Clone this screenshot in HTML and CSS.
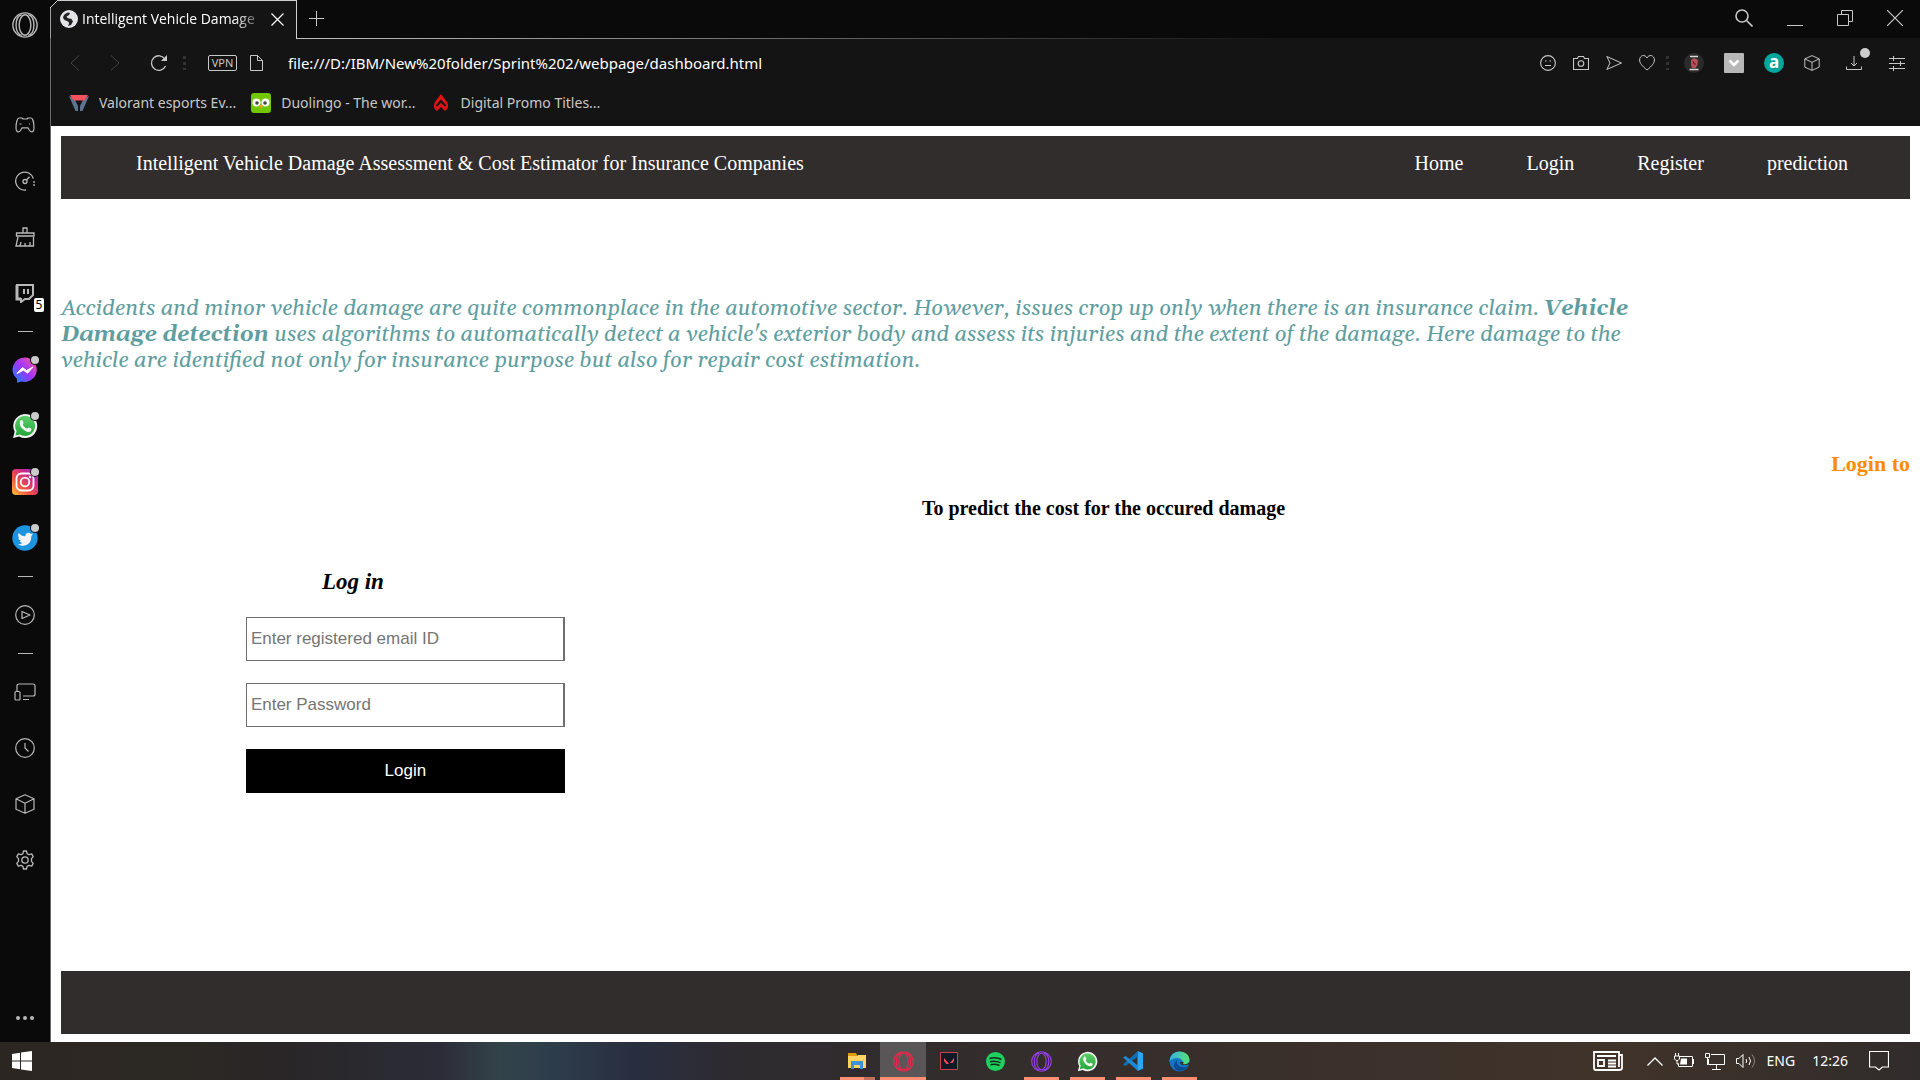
FILE: index.html
```html
<!DOCTYPE html>
<html lang="en">
<head>
<meta charset="utf-8">
<title>Intelligent Vehicle Damage Assessment</title>
<link rel="stylesheet" href="styles.css">
</head>
<body>
<svg class="defs" aria-hidden="true">
  <defs>
    <linearGradient id="g-messenger" x1="0" y1="1" x2="1" y2="0"><stop offset="0" stop-color="#0a8bff"/><stop offset=".5" stop-color="#a033ff"/><stop offset="1" stop-color="#ff5c87"/></linearGradient>
    <linearGradient id="g-insta" x1="0" y1="1" x2="1" y2="0"><stop offset="0" stop-color="#ffc53d"/><stop offset=".35" stop-color="#f2543d"/><stop offset=".65" stop-color="#cf2c86"/><stop offset="1" stop-color="#8a2bd0"/></linearGradient>
    <linearGradient id="g-wa" x1="0" y1="0" x2="0" y2="1"><stop offset="0" stop-color="#5fd06b"/><stop offset="1" stop-color="#22a53a"/></linearGradient>
    <linearGradient id="g-edge" x1="0" y1="0" x2="1" y2="0"><stop offset="0" stop-color="#2fb4ee"/><stop offset="1" stop-color="#5fe06a"/></linearGradient>
    <symbol id="i-opera" viewBox="0 0 24 24"><g fill="none" stroke="currentColor" stroke-width="1.300"><circle cx="12" cy="12" r="11.200"/><ellipse cx="12" cy="12" rx="5.400" ry="9.400"/><path d="M9 2.400c-7 2-7 17.200 0 19.200M15 2.400c7 2 7 17.200 0 19.200"/></g></symbol>
    <symbol id="i-cube" viewBox="0 0 20 20"><g fill="none" stroke="currentColor" stroke-linejoin="round" stroke-width="1.200"><path d="M10 .8l9 4v10.400l-9 4-9-4V4.800zM1 4.800l9 4.400 9-4.400M10 9.200v10"/></g></symbol>
    <symbol id="i-whatsapp" viewBox="0 0 26 26"><path d="M1 25l1.700-6.200A12 12 0 1 1 7.200 23.400z" fill="#f2f2f2"/><path d="M3.400 22.600l1.200-4.400A10 10 0 1 1 8 21.500z" fill="url(#g-wa)"/><path d="M8.500 7.500c.8-.9 1.800-.7 2.200.2l.8 2c.3.700-.9 1.500-.7 2 1 1.900 2.200 3 4.200 3.900.6.200 1.200-1.400 1.900-1.100l2.200 1.100c.7.400.3 2-.4 2.600-2 1.600-5 .3-7.300-1.600-2-1.700-5.100-5.600-2.900-9.100z" fill="#f7f7f7"/></symbol>
  </defs>
</svg>
<div class="screen">
  <div class="browser">
    <aside class="sidebar" aria-label="Browser sidebar">
      <div class="side-logo"><svg width="26" height="26"><use href="#i-opera"/></svg></div>
      <div class="side-item"><svg width="20" height="16" viewBox="0 0 20 16"><g fill="none" stroke="currentColor" stroke-width="1.200" stroke-linejoin="round"><path d="M4 1h3l1 1h4l1-1h3c1.500 0 3 4 3 10 0 4-2.500 5-4.500 2.500L13 10.800H7l-1.500 2.700C3.500 16 1 15 1 11 1 5 2.500 1 4 1z"/><path d="M4.500 7h2M14 7h1"/></g></svg></div>
      <div class="side-item"><svg width="20" height="20" viewBox="0 0 20 20"><g fill="none" stroke="currentColor" stroke-width="1.300"><path d="M11 19A9 9 0 1 1 18.300 7.500"/><path d="M19 10v5" stroke-dasharray="2 1"/><circle cx="10" cy="10.500" r="2"/><path d="M11.500 9L14.500 5.800"/></g></svg></div>
      <div class="side-item"><svg width="20" height="20" viewBox="0 0 20 20"><g fill="none" stroke="currentColor" stroke-width="1.300"><path d="M8 6V1h4v5M3 6h14l2 0v3H1.500V6zM3 10L1 19h17.500V10M5 19l1-4M10 19v-3M15 19v-4"/></g></svg></div>
      <div class="side-item"><svg width="20" height="20" viewBox="0 0 20 20"><path d="M2 2h16v10l-4 4h-4l-4 3v-3H2z" fill="none" stroke="currentColor" stroke-width="2"/><path d="M2 2v14h4" fill="none" stroke="currentColor" stroke-width="3"/><path d="M9 6v5M13 6v5" stroke="currentColor" stroke-width="2"/></svg><span class="count">5</span></div>
      <hr class="side-rule">
      <div class="side-item"><svg width="26" height="26" viewBox="0 0 26 26"><path d="M13 .5a12.200 12.200 0 1 1-3.500 24L5 25.800v-3.700A12.200 12.200 0 0 1 13 .5z" fill="url(#g-messenger)"/><path d="M5 16.500l5.500-6 4 3 6.500-3.500-5.500 6.200-4-3z" fill="#fff" stroke="#fff"/></svg><i class="dot"></i></div>
      <div class="side-item"><svg width="26" height="26"><use href="#i-whatsapp"/></svg><i class="dot"></i></div>
      <div class="side-item"><svg width="26" height="26" viewBox="0 0 26 26"><rect width="26" height="26" rx="4" fill="url(#g-insta)"/><g fill="none" stroke="#fff" stroke-width="1.800"><rect x="4.500" y="4.500" width="17" height="17" rx="5"/><circle cx="13" cy="13" r="4.300"/></g><circle cx="18" cy="8" r="1.200" fill="#fff"/></svg><i class="dot"></i></div>
      <div class="side-item"><svg width="26" height="26" viewBox="0 0 26 26"><circle cx="13" cy="13" r="12.700" fill="#1c94e0"/><path d="M21 8.500l-2 .6c-2-2.600-6-1-5.600 2.200-2.900 0-5-1.300-6.700-3.300-1.200 2-.3 4 .9 5l-1.300-.4c.1 1.800 1.300 2.800 2.700 3.300H7.700c.4 1.200 1.500 1.900 2.800 2-1.500 1.100-3 1.400-4.700 1.300 6.500 3.700 13.700.3 13.500-8z" fill="#f4f4f4"/></svg><i class="dot"></i></div>
      <hr class="side-rule">
      <div class="side-item"><svg width="20" height="20" viewBox="0 0 20 20"><g fill="none" stroke="currentColor" stroke-width="1.200" stroke-linejoin="round"><circle cx="10" cy="10" r="9.300"/><path d="M7 6.500v7l8-3.500z"/></g></svg></div>
      <hr class="side-rule">
      <div class="side-item"><svg width="22" height="18" viewBox="0 0 22 18"><g fill="none" stroke="currentColor" stroke-width="1.200"><path d="M3 8V3q0-2 2-2h14q2 0 2 2v8q0 2-2 2H9M9 16.500h6"/><rect x="1" y="8.500" width="5" height="8.500" rx="1"/></g></svg></div>
      <div class="side-item"><svg width="20" height="20" viewBox="0 0 20 20"><g fill="none" stroke="currentColor" stroke-width="1.200"><circle cx="10" cy="10" r="9.300"/><path d="M10 5v5l3.500 3.500"/></g></svg></div>
      <div class="side-item"><svg width="20" height="20"><use href="#i-cube"/></svg></div>
      <div class="side-item"><svg width="20" height="20" viewBox="0 0 20 20"><g fill="none" stroke="currentColor" stroke-width="1.300" stroke-linejoin="round"><path d="M8.500 1h3l.6 2.600 1.900 1.100 2.700-.8 1.500 2.700L16.500 8.600v2.800l1.700 2-1.500 2.700-2.700-.8-1.900 1.100-.6 2.600h-3l-.6-2.600L6 15.300l-2.700.8-1.500-2.700 1.700-2V8.600l-1.700-2 1.500-2.700 2.700.8 1.900-1.100z"/><circle cx="10" cy="10" r="3.200"/></g></svg></div>
      <div class="side-more"><svg width="18" height="4" viewBox="0 0 18 4"><g fill="currentColor"><circle cx="2" cy="2" r="2"/><circle cx="9" cy="2" r="2"/><circle cx="16" cy="2" r="2"/></g></svg></div>
    </aside>
    <div class="window">
      <div class="tabs">
        <div class="tab">
          <svg class="tab-edge" width="20" height="38" viewBox="0 0 20 38"><path d="M0 0h8L0 8z" fill="#0a0a0a"/><path d="M0 38V8L7.500.5H20" fill="none" stroke="#d0d0d0"/></svg>
          <svg width="18" height="18" viewBox="0 0 18 18"><circle cx="9" cy="9" r="9" fill="#e4e4e8"/><path d="M3 8q0-4 5-5.500l2 .5-1 2-2.500 1.500 1 1.500 4 1 1.500 2.500-2 3.500-3 1q2-3 0-4.500L4.500 10z" fill="#222"/></svg>
          <span class="tab-title">Intelligent Vehicle Damage</span>
          <button class="icon" aria-label="Close tab"><svg width="13" height="13" viewBox="0 0 13 13"><path d="M.5.500l12 12M12.500.500l-12 12" stroke="currentColor" stroke-width="1.200"/></svg></button>
        </div>
        <div class="strip">
          <button class="icon" aria-label="New tab"><svg width="15" height="15" viewBox="0 0 15 15"><path d="M7.500 0v15M0 7.500h15" stroke="currentColor"/></svg></button>
          <div class="controls">
            <button class="icon" aria-label="Search"><svg width="18" height="18" viewBox="0 0 18 18"><g fill="none" stroke="currentColor" stroke-width="1.600"><circle cx="7" cy="7" r="6"/><path d="M11.500 11.500l6 6"/></g></svg></button>
            <button class="icon" aria-label="Minimize"><svg width="16" height="16" viewBox="0 0 16 16"><path d="M0 15.500h16" stroke="currentColor"/></svg></button>
            <button class="icon" aria-label="Restore"><svg width="16" height="16" viewBox="0 0 16 16"><path d="M.5 4.500h11v11H.5zM4.500 4V.5h11v11H12" fill="none" stroke="currentColor"/></svg></button>
            <button class="icon" aria-label="Close"><svg width="16" height="16" viewBox="0 0 16 16"><path d="M0 0l16 16M16 0L0 16" stroke="currentColor" stroke-width="1.200"/></svg></button>
          </div>
        </div>
      </div>
      <div class="toolbar">
        <div class="nav-buttons">
          <button class="icon dim" aria-label="Back"><svg width="10" height="16" viewBox="0 0 10 16"><path d="M9 .5L1 8l8 7.500" fill="none" stroke="currentColor"/></svg></button>
          <button class="icon dim" aria-label="Forward"><svg width="10" height="16" viewBox="0 0 10 16"><path d="M1 .5L9 8l-8 7.500" fill="none" stroke="currentColor"/></svg></button>
          <button class="icon" aria-label="Reload"><svg width="18" height="18" viewBox="0 0 18 18"><path d="M15.500 12A7.300 7.300 0 1 1 15 5.200" fill="none" stroke="currentColor" stroke-width="1.300"/><path d="M17 1v6h-6z" fill="currentColor"/></svg></button>
        </div>
        <i class="dots"></i>
        <span class="vpn">VPN</span>
        <svg class="page-icon" width="13" height="16" viewBox="0 0 13 16"><path d="M.5.500h7l5 5v10H.5zM7.500.500v5h5" fill="none" stroke="currentColor"/></svg>
        <span class="url">file:///D:/IBM/New%20folder/Sprint%202/webpage/dashboard.html</span>
        <div class="actions">
          <svg width="16" height="16" viewBox="0 0 16 16"><g fill="none" stroke="currentColor" stroke-width="1.100"><circle cx="8" cy="8" r="7.400"/><path d="M5 6h1.500M9.500 6H11M5 10.500h6"/></g></svg>
          <svg width="16" height="16" viewBox="0 0 16 16"><g fill="none" stroke="currentColor" stroke-width="1.100"><path d="M.5 3.500h4l1-2h5l1 2h4v11H.5z"/><circle cx="8" cy="8.500" r="2.800"/></g></svg>
          <svg width="16" height="16" viewBox="0 0 16 16"><path d="M.8 1.500L15.500 8 .8 14.500 4 8z" fill="none" stroke="currentColor"/></svg>
          <svg width="16" height="16" viewBox="0 0 16 16"><path d="M8 15C3 11 .6 8 .6 5c0-5 5.600-6 7.400-2 1.800-4 7.400-3 7.400 2 0 3-2.400 6-7.400 10z" fill="none" stroke="currentColor"/></svg>
        </div>
        <i class="dots"></i>
        <div class="extensions">
          <svg width="20" height="20" viewBox="0 0 20 20"><circle cx="10" cy="10" r="10" fill="#2b2b2b"/><path d="M6 3.500h8M5.500 16.500h9" stroke="#d8d8d8" stroke-width="1.500"/><path d="M7 7l3-2 4 2-.5 5-2 3H8l-1-3z" fill="#b8505a"/><path d="M9 8l1 3 2 0" stroke="#4a2024" fill="none"/></svg>
          <svg width="20" height="20" viewBox="0 0 20 20"><rect width="20" height="20" rx="1" fill="#b8b8b8"/><path d="M5.500 7.500L10 12l4.500-4.500" fill="none" stroke="#fff" stroke-width="2.600"/></svg>
          <span class="ext-a">a</span>
          <svg width="16" height="16"><use href="#i-cube"/></svg>
          <span class="download"><svg width="16" height="16" viewBox="0 0 16 16"><path d="M8 1v10M5 8l3 3 3-3M.5 11.500v3h15v-3" fill="none" stroke="currentColor"/></svg><i class="dot"></i></span>
          <svg width="16" height="16" viewBox="0 0 16 16"><path d="M0 3.500h16M0 8.500h16M0 13.500h16M4.500 1v5M11.500 6v5M4.500 11v5" stroke="currentColor" fill="none"/></svg>
        </div>
      </div>
      <nav class="bookmarks" aria-label="Bookmarks">
        <a href="#"><svg width="20" height="20" viewBox="0 0 20 20"><path d="M0 3l6.500 15H9v-5L5 5zM20 3l-6.500 15H11v-5l4-8z" fill="#5d7390"/><path d="M1 2h18l-3.500 5.500h-11z" fill="#f4505e"/></svg>Valorant esports Ev...</a>
        <a href="#"><svg width="20" height="20" viewBox="0 0 20 20"><rect width="20" height="20" rx="3" fill="#72c800"/><circle cx="5.500" cy="9.500" r="4" fill="#fff"/><circle cx="14.500" cy="9.500" r="4" fill="#fff"/><circle cx="6" cy="10" r="1.800" fill="#444"/><circle cx="14" cy="10" r="1.800" fill="#444"/><path d="M8 12h4l-2 4z" fill="#f9a01b"/></svg>Duolingo - The wor...</a>
        <a href="#"><svg width="20" height="20" viewBox="0 0 20 20"><path d="M10 1l6 8q3 6-2 9l-4-4-4 4q-5-3-2-9z" fill="#e01212"/><path d="M5.500 13L10 8l4.500 5" fill="none" stroke="#141414" stroke-width="2"/></svg>Digital Promo Titles...</a>
      </nav>
      <main class="page">
        <header class="site-header">
          <span class="brand">Intelligent Vehicle Damage Assessment &amp; Cost Estimator for Insurance Companies</span>
          <nav class="site-nav" aria-label="Site"><a href="#">Home</a><a href="#">Login</a><a href="#">Register</a><a href="#">prediction</a></nav>
        </header>
        <p class="intro">Accidents and minor vehicle damage are quite commonplace in the automotive sector. However, issues crop up only when there is an insurance claim. <b>Vehicle Damage detection</b> uses algorithms to automatically detect a vehicle's exterior body and assess its injuries and the extent of the damage. Here damage to the vehicle are identified not only for insurance purpose but also for repair cost estimation.</p>
        <h3 class="ticker">Login to</h3>
        <h4 class="caption">To predict the cost for the occured damage</h4>
        <form class="login">
          <h3>Log in</h3>
          <input type="email" placeholder="Enter registered email ID" aria-label="Email">
          <input type="password" placeholder="Enter Password" aria-label="Password">
          <button type="button">Login</button>
        </form>
        <footer class="site-footer"></footer>
      </main>
    </div>
  </div>
  <div class="taskbar">
    <button class="start" aria-label="Start"><svg width="20" height="20" viewBox="0 0 20 20"><path d="M0 3l8-1.300v7.800H0zM9 1.500L20 0v9.500H9zM0 10.500h8v7.800L0 17zM9 10.500h11V20L9 18.500z" fill="#fff"/></svg></button>
    <div class="apps">
      <button class="app open stack" aria-label="Files"><svg width="18" height="16" viewBox="0 0 18 16"><path d="M0 0h8l1 2v3H0z" fill="#e09c0a"/><path d="M0 3h9l1-1h8v13H0z" fill="#ffd462"/><path d="M3 8h12v8h-3v-4H6v4H3z" fill="#3a92dc"/></svg></button>
      <button class="app open active" aria-label="Opera GX"><svg class="red" width="21" height="21"><use href="#i-opera"/></svg></button>
      <button class="app" aria-label="Valorant"><svg width="18" height="18" viewBox="0 0 18 18"><path d="M.5.500h17v17H.5z" fill="#101a26" stroke="#c8414f"/><path d="M4 6l5 6H6.500L4 9zM14 6v3l-1.500 2H10z" fill="#ff4c5b"/></svg></button>
      <button class="app" aria-label="Spotify"><svg width="19" height="19" viewBox="0 0 19 19"><circle cx="9.500" cy="9.500" r="9.500" fill="#1ed05f"/><path d="M3.500 6.500q6.500-2 12 1M4 9.700q5.500-1.500 10.500 1M4.500 12.700q5-1.200 9 .8" stroke="#14281c" stroke-width="1.500" fill="none"/></svg></button>
      <button class="app open" aria-label="Opera"><svg class="violet" width="21" height="21"><use href="#i-opera"/></svg></button>
      <button class="app open" aria-label="WhatsApp"><svg width="21" height="21"><use href="#i-whatsapp"/></svg></button>
      <button class="app open" aria-label="Code"><svg width="20" height="20" viewBox="0 0 20 20"><path d="M14.500 0L20 2.300v15.400L14.500 20z" fill="#2aa7f0"/><path d="M15 0v5.500L2.500 15 0 13.500z" fill="#0f6fb8"/><path d="M15 20v-5.500L2.500 5 0 6.500z" fill="#1b8ad6"/></svg></button>
      <button class="app open" aria-label="Edge"><svg width="21" height="21" viewBox="0 0 21 21"><circle cx="10.500" cy="10.500" r="10" fill="#1277c9"/><path d="M.5 10.500C1 4 5 .5 10.500.500c6 0 10 4 10 8.500 0 4-4 5.500-7.500 4 2-3-1-6-5-6-3 0-6 1.500-7.500 3.500z" fill="url(#g-edge)"/><path d="M8.500 9c-2 4 2 9 10 6.500C14 22 5 21 5 14.500 5 12 6.500 10 8.500 9z" fill="#0c4a93"/><path d="M20.500 13q-3 2-7.500 1-2.500-.8-2-3l8-.5z" fill="#382e2a"/><path d="M12 7q4 3 2 6 5 1 6-3l-2-5z" fill="#4ed98a"/></svg></button>
    </div>
    <div class="tray">
      <svg class="news" width="30" height="20" viewBox="0 0 30 20"><g fill="none" stroke="#fff" stroke-width="1.800"><path d="M26 4h3v13q0 2-3 2H3q-2 0-2-2V1h25v15"/><path d="M4 5h19M15 9.500h8M15 12.500h8M15 15.500h8"/><path d="M5 9h6v6H5z"/></g></svg>
      <svg width="16" height="9" viewBox="0 0 16 9"><path d="M.5 8.500L8 1l7.500 7.500" fill="none" stroke="#fff" stroke-width="1.300"/></svg>
      <svg width="20" height="16" viewBox="0 0 20 16"><path d="M5 3.500h13.500v10H4.500v-3M19.500 6v5" fill="none" stroke="#fff"/><path d="M.5 3h5v3l-1.500 1.500H2L.5 6zM1.500 3V0M4.500 3V0M3 7v4h2" fill="none" stroke="#fff"/><path d="M7 5.500h6v6H6z" fill="#fff"/></svg>
      <svg width="20" height="17" viewBox="0 0 20 17"><path d="M6 1.500h13.500v10H3.500V6M.5.500h4v4h-4zM2.500 4v8M11.500 12v4M7 16.500h9" fill="none" stroke="#fff"/></svg>
      <svg width="20" height="18" viewBox="0 0 20 18"><path d="M.5 6.500H3l4-4v13l-4-4H.5zM10 7q1.500 2 0 4M13 5q3 4 0 8" fill="none" stroke="#fff"/><path d="M16 2.500q5 6.500 0 13" fill="none" stroke="#888"/></svg>
      <span class="lang">ENG</span>
      <time class="clock">12:26</time>
      <svg class="note" width="20" height="20" viewBox="0 0 20 20"><path d="M.5.500h19v15.500h-6l-3.500 3-3.500-3h-6z" fill="none" stroke="#fff" stroke-width="1.200"/></svg>
    </div>
  </div>
</div>
</body>
</html>
```
FILE: styles.css
```css
* { box-sizing: border-box; }
body { margin: 0; font: 14px/20px "Noto Sans", sans-serif; background: #0a0a0a; color: #c8c8c8; }
svg { display: block; flex: none; }
button { font: inherit; color: inherit; border: 0; background: none; padding: 0; }
.defs { position: absolute; width: 0; height: 0; }
.screen { min-height: 100vh; display: flex; flex-direction: column; }
.browser { flex: 1; display: flex; }

/* Sidebar */
.sidebar { width: 51px; border-right: 1px solid #6a6a6a; background: #0a0a0a; display: flex; flex-direction: column; color: #b8b8b8; }
.side-logo { height: 50px; margin-bottom: 47px; display: grid; place-items: center; }
.side-item { position: relative; height: 56px; display: grid; place-items: center; }
.side-rule { width: 15px; height: 1px; margin: 10px auto; border: 0; background: #b8b8b8; }
.side-more { height: 48px; margin-top: auto; display: grid; place-items: center; }
.dot { position: absolute; width: 8px; height: 8px; border-radius: 4px; background: #ccc; }
.side-item .dot { right: 11px; top: 14px; box-shadow: 0 0 0 1px #0a0a0a; }
.count { position: absolute; right: 6px; bottom: 9px; width: 10px; height: 14px; border-radius: 2px; background: #fff; color: #000; font-size: 12px; line-height: 14px; text-align: center; }

/* Browser chrome */
.window { flex: 1; min-width: 0; display: flex; flex-direction: column; }
.tabs { display: flex; height: 39px; }
.tab { position: relative; width: 246px; padding: 0 12px 2px 9px; display: flex; align-items: center; gap: 4px; background: #141414; border-top: 1px solid #d0d0d0; border-right: 1px solid #d0d0d0; color: #fff; }
.tab-edge { position: absolute; left: -1px; top: -1px; }
.tab-title { flex: 1; font-family: "Open Sans", sans-serif; white-space: nowrap; -webkit-mask-image: linear-gradient(90deg, #000 82%, transparent); mask-image: linear-gradient(90deg, #000 82%, transparent); }
.strip { flex: 1; padding: 0 17px 2px 12px; display: flex; align-items: center; justify-content: space-between; border-bottom: 1px solid; border-image: linear-gradient(90deg, #c0c0c0, #141414 60%) 1; }
.icon { display: flex; align-items: center; }
.dim { color: #444; }
.controls { display: flex; gap: 34px; }
.toolbar { height: 47px; padding: 0 15px 0 19px; display: flex; align-items: center; background: #141414; }
.nav-buttons { display: flex; gap: 30px; margin-right: 15px; }
.dots { width: 3px; height: 14px; background: repeating-linear-gradient(#333 0 3px, #141414 3px 6px); }
.vpn { margin: 0 13px 0 22px; width: 29px; height: 16px; border: 1px solid #c8c8c8; border-radius: 2px; font-size: 11px; line-height: 14px; text-align: center; }
.page-icon { margin-right: 25px; }
.url { color: #fff; font-size: 15px; }
.actions { margin: 0 11px 0 auto; display: flex; gap: 17px; }
.extensions { margin-left: 15px; display: flex; align-items: center; gap: 20px; }
.ext-a { width: 20px; height: 20px; border-radius: 10px; background: #00a79a; color: #fff; font-weight: 700; font-size: 17px; line-height: 17px; text-align: center; }
.download { position: relative; margin: 0 7px 0 6px; }
.download .dot { width: 10px; height: 10px; border-radius: 5px; left: 14px; top: -7px; }
.bookmarks { height: 40px; padding: 0 18px 6px; display: flex; align-items: center; gap: 15px; background: #141414; }
.bookmarks a { display: flex; align-items: center; gap: 10px; color: #c8c8c8; text-decoration: none; }

/* Web page */
.page { flex: 1; padding: 10px 10px 8px; display: flex; flex-direction: column; background: #fff; color: #000; font-family: "Liberation Serif", serif; }
.page h3 { margin: 0; font-size: 23px; line-height: 26px; }
.site-header, .site-footer { height: 63px; background: #322d2d; }
.site-header { padding: 16px 62px 0 75px; display: flex; justify-content: space-between; font-size: 20px; line-height: 23px; color: #fff; }
.site-nav { display: flex; gap: 63px; }
.site-nav a { color: #fff; text-decoration: none; }
.intro { width: 87%; margin: 97px 0 77px; font: italic 22px/26px Gelasio, "Liberation Serif", serif; color: #5f9ea0; }
.page .ticker { font-size: 22px; text-align: right; color: #ff8c00; }
.caption { margin: 20px 0 49px; padding-left: 236px; font-size: 20px; line-height: 23px; text-align: center; }
.login { width: 319px; margin-left: 10%; display: flex; flex-direction: column; gap: 22px; }
.login h3 { padding-left: 76px; font-style: italic; }
.login input, .login button { height: 44px; font: 17px "Liberation Sans", sans-serif; }
.login input { padding: 0 4px; border: 1px solid #6f6f6f; border-right-width: 2px; border-radius: 0; background: #fff; }
.login input::placeholder { color: #757575; opacity: 1; }
.login button { background: #000; color: #fff; }
.site-footer { margin-top: auto; }

/* Taskbar */
.taskbar { height: 38px; display: flex; color: #fff; background: linear-gradient(90deg, #2c2622, #2c2925 10%, #2a2526 14%, #29292d 18%, #2c2c38 23%, #33434a 26%, #2d3c4b 29%, #282e40 33%, #2e2b30 38%, #322d2c 50%, #392f2b 65%, #40332a 84%, #302c2b); }
.start { width: 55px; padding-left: 12px; }
.apps { display: flex; margin-left: 779px; }
.app { width: 46px; display: grid; place-items: center; border-bottom: 3px solid transparent; padding-top: 3px; }
.app.open { background: linear-gradient(#ff8f73, #ff8f73) center bottom / 35px 3px no-repeat border-box; }
.app.stack { background: linear-gradient(90deg, #ff8f73 24px, #c46f5c 24px) center bottom / 35px 3px no-repeat border-box; }
.app.active { border-color: #ff8f73; background: #5a5657; }
.red { color: #f0264e; }
.violet { color: #9a40f0; }
.tray { margin-left: auto; padding-right: 31px; display: flex; align-items: center; gap: 11px; }
.news { margin-right: 13px; }
.clock { margin: 0 10px 0 6px; }
@media (max-width: 1500px) { .apps { margin-left: auto; } }
```
